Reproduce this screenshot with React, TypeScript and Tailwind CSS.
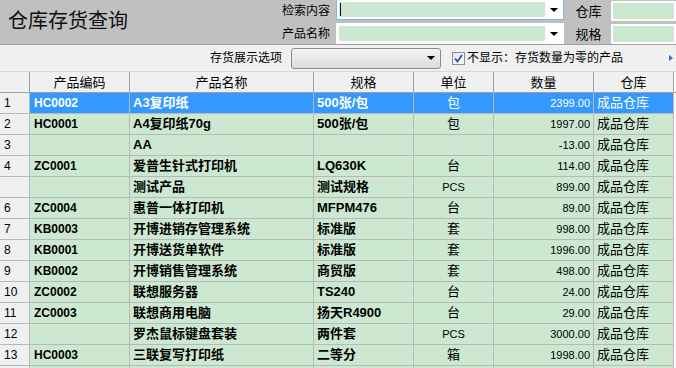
import React from 'react';

type Row = {
  no: string;
  code: string;
  name: string;
  spec: string;
  unit: string;
  qty: string;
  wh: string;
};

const rows: Row[] = [
  { no: '1', code: 'HC0002', name: 'A3复印纸', spec: '500张/包', unit: '包', qty: '2399.00', wh: '成品仓库' },
  { no: '2', code: 'HC0001', name: 'A4复印纸70g', spec: '500张/包', unit: '包', qty: '1997.00', wh: '成品仓库' },
  { no: '3', code: '', name: 'AA', spec: '', unit: '', qty: '-13.00', wh: '成品仓库' },
  { no: '4', code: 'ZC0001', name: '爱普生针式打印机', spec: 'LQ630K', unit: '台', qty: '114.00', wh: '成品仓库' },
  { no: '', code: '', name: '测试产品', spec: '测试规格', unit: 'PCS', qty: '899.00', wh: '成品仓库' },
  { no: '6', code: 'ZC0004', name: '惠普一体打印机', spec: 'MFPM476', unit: '台', qty: '89.00', wh: '成品仓库' },
  { no: '7', code: 'KB0003', name: '开博进销存管理系统', spec: '标准版', unit: '套', qty: '998.00', wh: '成品仓库' },
  { no: '8', code: 'KB0001', name: '开博送货单软件', spec: '标准版', unit: '套', qty: '1996.00', wh: '成品仓库' },
  { no: '9', code: 'KB0002', name: '开博销售管理系统', spec: '商贸版', unit: '套', qty: '498.00', wh: '成品仓库' },
  { no: '10', code: 'ZC0002', name: '联想服务器', spec: 'TS240', unit: '台', qty: '24.00', wh: '成品仓库' },
  { no: '11', code: 'ZC0003', name: '联想商用电脑', spec: '扬天R4900', unit: '台', qty: '29.00', wh: '成品仓库' },
  { no: '12', code: '', name: '罗杰鼠标键盘套装', spec: '两件套', unit: 'PCS', qty: '3000.00', wh: '成品仓库' },
  { no: '13', code: 'HC0003', name: '三联复写打印纸', spec: '二等分', unit: '箱', qty: '1998.00', wh: '成品仓库' },
  { no: '', code: '', name: '', spec: '', unit: '', qty: '', wh: '' },
];

const font = "font-['Liberation_Sans','Noto_Sans_CJK_SC',sans-serif]";
const cols = 'grid grid-cols-[30px_100px_184px_100px_80px_100px_80px_2px]';

const Combo = ({ focus }: { focus?: boolean }) => (
  <div
    className={`flex h-[21px] w-[228px] border ${
      focus ? 'border-[#7eb4ea]' : 'border-white'
    } bg-white`}
  >
    <div className="flex-1 m-[2px] mr-0 bg-[#cde8d0] flex items-center">
      {focus && <div className="ml-[1px] w-px h-[13px] bg-[#300018]" />}
    </div>
    <div className="w-[18px] flex items-center justify-center">
      <div className="w-0 h-0 border-l-[4px] border-r-[4px] border-t-[4px] border-l-transparent border-r-transparent border-t-black" />
    </div>
  </div>
);

const GreenBox = () => (
  <div className="h-[21px] w-full border-[2px] border-white bg-[#cde8d0]" />
);

export default function App() {
  return (
    <div className={`w-[676px] h-[368px] overflow-hidden bg-[#f0f0f0] ${font} text-black`}>
      {/* Top search bar */}
      <div className="h-[45px] bg-[#c0c0c0] border-b border-[#a0a0a0] flex">
        <div className="flex-1 pl-[8px] pt-[7px] text-[20px] leading-[28px] text-[#101010]">
          仓库存货查询
        </div>
        <div className="flex flex-col gap-[3px] pr-[6px] pt-[1px] text-[12px] text-right">
          <div className="h-[20px] leading-[20px]">检索内容</div>
          <div className="h-[20px] leading-[20px]">产品名称</div>
        </div>
        <div className="flex flex-col gap-[3px] -mt-[1px]">
          <Combo focus />
          <Combo />
        </div>
        <div className="flex flex-col gap-[3px] w-[47px] items-center pt-[1px] text-[13px] pl-[2px]">
          <div className="h-[20px] leading-[22px]">仓库</div>
          <div className="h-[20px] leading-[22px]">规格</div>
        </div>
        <div className="flex flex-col gap-[3px] w-[65px] pt-[1px]">
          <GreenBox />
          <GreenBox />
        </div>
      </div>

      {/* Options row */}
      <div className="h-[26px] flex items-center text-[12px]">
        <div className="w-[210px]" />
        <div className="w-[81px] leading-none">存货展示选项</div>
        <div className="w-[150px] h-[21px] rounded-[3px] border border-[#8a8a8a] bg-gradient-to-b from-[#f4f4f4] to-[#dcdcdc] flex items-center justify-end pr-[5px]">
          <div className="w-0 h-0 border-l-[4px] border-r-[4px] border-t-[4px] border-l-transparent border-r-transparent border-t-black" />
        </div>
        <div className="ml-[11px] w-[13px] h-[13px] border border-[#8f8f8f] bg-gradient-to-br from-[#e4e4e4] to-white flex items-center justify-center">
          <svg width="9" height="9" viewBox="0 0 9 9">
            <path d="M1 4.5 L3.5 7.5 L8 1" stroke="#2a4fb8" strokeWidth="1.8" fill="none" />
          </svg>
        </div>
        <div className="ml-[2px] leading-none">不显示：存货数量为零的产品</div>
        <div className="flex-1" />
        <div className="mr-[3px] w-0 h-0 border-t-[3px] border-b-[3px] border-l-[4px] border-t-transparent border-b-transparent border-l-[#2f6fd8]" />
      </div>

      {/* Grid */}
      <div className="border-t border-[#d8d8d8] bg-white">
        <div className={`${cols} h-[21px] bg-[#f0f0f0] text-[13px] border-b border-[#a0a0a0]`}>
          <div className="border-r border-[#a0a0a0]" />
          {['产品编码', '产品名称', '规格', '单位', '数量', '仓库'].map((h) => (
            <div key={h} className="border-r border-[#a0a0a0] flex items-center justify-center leading-none">
              {h}
            </div>
          ))}
          <div className="bg-white" />
        </div>
        {rows.map((r, i) => {
          const sel = i === 0;
          const cell = `border-r border-b border-[#b8b8b8] flex items-center whitespace-nowrap overflow-hidden ${
            sel ? 'bg-[#3399ff] text-white' : 'bg-[#cde8d0]'
          }`;
          return (
            <div key={i} className={`${cols} h-[21px]`}>
              <div className="border-r border-b border-[#b8b8b8] bg-[#f0f0f0] flex items-center pl-[4px] text-[12px]">
                {r.no}
              </div>
              <div className={`${cell} pl-[4px] text-[12px] font-bold`}>{r.code}</div>
              <div className={`${cell} pl-[3px] text-[13px] font-bold`}>{r.name}</div>
              <div className={`${cell} pl-[3px] text-[13px] font-bold`}>{r.spec}</div>
              <div className={`${cell} justify-center ${r.unit === 'PCS' ? 'text-[11px]' : 'text-[13px]'}`}>{r.unit}</div>
              <div className={`${cell} justify-end pr-[3px] text-[11px]`}>{r.qty}</div>
              <div className={`${cell} pl-[3px] text-[13px]`}>{r.wh}</div>
              <div className="bg-white" />
            </div>
          );
        })}
      </div>
    </div>
  );
}
